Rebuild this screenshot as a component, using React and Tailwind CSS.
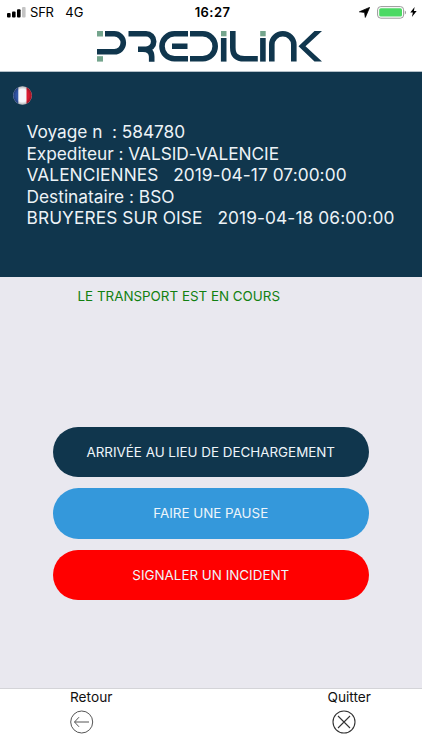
import React from 'react';

const voyage = [
  { text: 'Voyage n  : 584780', spacing: 'tracking-[-0.03px]' },
  { text: 'Expediteur : VALSID-VALENCIE', spacing: 'tracking-[-0.03px]' },
  { text: 'VALENCIENNES   2019-04-17 07:00:00', spacing: 'tracking-[0.07px]' },
  { text: 'Destinataire : BSO', spacing: 'tracking-[0.02px]' },
  { text: 'BRUYERES SUR OISE   2019-04-18 06:00:00', spacing: 'tracking-[0.11px]' },
];

const actions = [
  { label: 'ARRIVÉE AU LIEU DE DECHARGEMENT', style: 'bg-[#10364d]' },
  { label: 'FAIRE UNE PAUSE', style: 'bg-[#3498db]' },
  { label: 'SIGNALER UN INCIDENT', style: 'bg-[#ff0000]' },
];

const StatusBar = () => (
  <div className="grid h-6 grid-cols-[1fr_auto_1fr] items-center pl-[7px] pr-[5px] text-[13px] leading-none text-black">
    <div className="flex items-center">
      <svg className="h-[11px] w-[19px]" viewBox="0 0 19 11">
        <rect x="0" y="6" width="3.6" height="4.5" rx="1" />
        <rect x="5" y="4.5" width="3.6" height="6" rx="1" />
        <rect x="10" y="2.3" width="3.6" height="8.2" rx="1" />
        <rect x="15" y="0" width="3.6" height="10.5" rx="1" fill="#c4c4c4" />
      </svg>
      <span className="ml-[4px] tracking-[-0.2px]">SFR</span>
      <span className="ml-[11.5px]">4G</span>
    </div>
    <span className="pl-px font-semibold tracking-[0.4px]">16:27</span>
    <div className="flex items-center justify-end">
      <svg className="mr-[7px] h-[11px] w-[11px]" viewBox="0 0 11 11">
        <path d="M10.6 0.4 6.3 10.4 5.6 5.4 0.4 4.8z" stroke="#000" strokeWidth="0.8" strokeLinejoin="round" />
      </svg>
      <svg className="mr-[3px] h-[13px] w-[30px]" viewBox="0 0 30 13">
        <rect x="0.6" y="0.6" width="26" height="11.6" rx="3.2" fill="#fff" stroke="#999" strokeWidth="1" />
        <rect x="2.2" y="2.2" width="22.8" height="8.4" rx="1.6" fill="#4cd964" />
        <path d="M27.8 4.4c1.6.6 1.6 3.4 0 4z" fill="#999" />
      </svg>
      <svg className="h-[10px] w-[7px]" viewBox="0 0 7 10">
        <path d="M4.6 0 0.3 5.6h2.6L1.9 10 6.7 4H3.9z" />
      </svg>
    </div>
  </div>
);

const Logo = () => (
  <svg className="h-[31px] w-[226px]" viewBox="97 31 226 31" fill="none" stroke="#10364d" strokeWidth="5.6">
    {/* P */}
    <path d="M105 33.8h9.3a9 9 0 0 1 0 18H97" />
    {/* R */}
    <path d="M128.5 33.8H146a7.6 7.6 0 0 1 0 15.4H138M143 49.2c6 0 8.7 2.5 8.7 7.5v5" />
    {/* E */}
    <path d="M188 33.8h-13.5a12.5 12.5 0 0 0 0 25H188M172 46.2h15.5" />
    {/* D */}
    <path d="M190 33.8h12.7a12.5 12.5 0 0 1 0 25H190" />
    {/* i, L, i, n */}
    <path d="M223.7 38v23.6" />
    <path d="M232.8 31v16.5c0 8 4 11.3 11.5 11.3h13.5" />
    <path d="M262.9 38v23.6" />
    <path d="M271.8 61.6V44.5a11 10.7 0 0 1 22 0v17.1" />
    {/* K */}
    <path d="M298.5 46.2 314.5 31h7.5L305.5 46.2 322 61.6h-7.5z" fill="#10364d" stroke="none" />
    <g fill="#74a58d" stroke="none">
      <rect x="97" y="31" width="6" height="5.5" />
      <rect x="97" y="56.2" width="6" height="5.4" />
      <rect x="221" y="31" width="5.5" height="5.3" />
      <rect x="260.2" y="31" width="5.5" height="5.3" />
    </g>
  </svg>
);

const Drapeau = () => (
  <svg className="h-[19px] w-[19px]" viewBox="0 0 19 19">
    <defs>
      <clipPath id="rond">
        <circle cx="9.5" cy="9.5" r="9.3" />
      </clipPath>
      <radialGradient id="relief" cx="0.5" cy="0.5" r="0.55">
        <stop offset="0.6" stopColor="#000" stopOpacity="0" />
        <stop offset="1" stopColor="#000" stopOpacity="0.4" />
      </radialGradient>
    </defs>
    <g clipPath="url(#rond)">
      <rect width="19" height="19" fill="#f6f6fa" />
      <rect width="5.3" height="19" fill="#3155a5" />
      <rect x="13.5" width="5.5" height="19" fill="#d81930" />
      <rect width="19" height="19" fill="url(#relief)" />
    </g>
  </svg>
);

const App = () => {
  return (
    <div className="flex h-[750px] w-[422px] flex-col bg-[#e9e8ef] font-['Inter',sans-serif]">
      {/* En-tête */}
      <header className="h-[72px] border-b border-[#b4c0c8] bg-white">
        <StatusBar />
        <div className="flex pl-[97px] pt-[7px]">
          <Logo />
        </div>
      </header>

      {/* Détails du voyage */}
      <section className="h-[205px] bg-[#10364d] pl-[13px] pt-[14px]">
        <Drapeau />
        <div className="pl-[13.5px] pt-[16px] text-[17.3px] leading-[21.5px] text-[#edf3f7]">
          {voyage.map((ligne) => (
            <p key={ligne.text} className={`whitespace-pre ${ligne.spacing}`}>
              {ligne.text}
            </p>
          ))}
        </div>
      </section>

      <p className="pl-[77.5px] pt-[10px] text-[13.4px] leading-[18px] text-[#118011]">
        LE TRANSPORT EST EN COURS
      </p>

      {/* Actions */}
      <div className="mx-[53px] mt-[121.5px] flex flex-col gap-[11px]">
        {actions.map((action) => (
          <button
            key={action.label}
            className={`h-[50.6px] w-[315.5px] rounded-full text-[13.4px] text-[#eef5fa] ${action.style}`}
          >
            {action.label}
          </button>
        ))}
      </div>

      {/* Navigation */}
      <footer className="mt-auto flex h-[62px] justify-between border-t border-[#d4d4d8] bg-white pl-[70px] pr-[51px] text-[13.7px] leading-[16px] text-[#111]">
        <button className="flex flex-col items-start">
          <span>Retour</span>
          <svg className="mt-[4.5px] h-6 w-6" viewBox="0 0 24 24" fill="none" stroke="#555" strokeWidth="1">
            <circle cx="11.7" cy="12" r="11" />
            <path d="M4.5 12h14.5M9 7.2 4.5 12l4.5 4.8" />
          </svg>
        </button>
        <button className="flex flex-col items-start">
          <span>Quitter</span>
          <svg className="ml-[4.5px] mt-[4.5px] h-6 w-6" viewBox="0 0 24 24" fill="none" stroke="#333" strokeWidth="1.1">
            <circle cx="12" cy="12" r="11" />
            <path d="m6 6 12 12M18 6 6 18" />
          </svg>
        </button>
      </footer>
    </div>
  );
};

export default App;
